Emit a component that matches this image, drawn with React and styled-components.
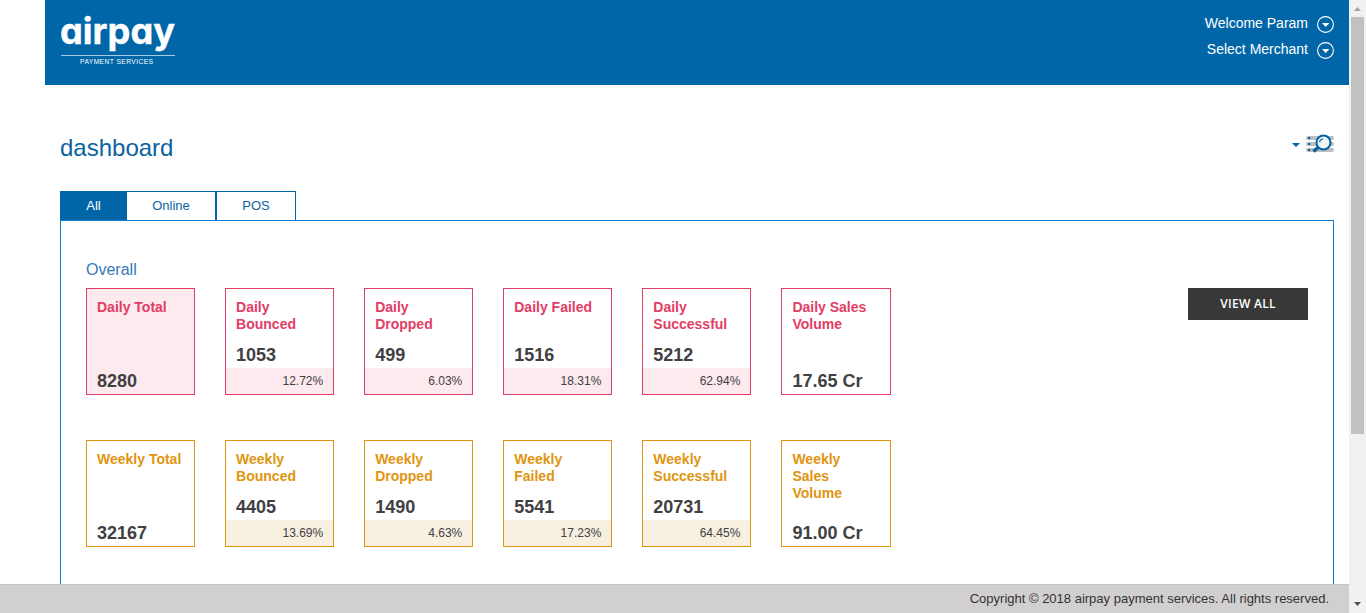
import React from "react";
import styled, { createGlobalStyle } from "styled-components";

const Global = createGlobalStyle`
  * { box-sizing: border-box; }
  body { margin: 0; background: #fff; font-family: "Liberation Sans", Arial, sans-serif; overflow: hidden; }
`;

const Shell = styled.div`
  height: 613px;
  display: flex;
`;
const Page = styled.div`
  flex: 1;
  min-width: 0;
  display: flex;
  flex-direction: column;
`;
const Header = styled.header`
  height: 85px;
  flex: none;
  margin-left: 45px;
  padding: 11px 15px 0;
  background: #0066a8;
  display: flex;
  justify-content: space-between;
`;
const LogoSvg = styled.svg`
  overflow: visible;
`;
const Wordmark = styled.text`
  fill: #fff;
  font-family: Inter, sans-serif;
  font-weight: 700;
  font-size: 36px;
  font-feature-settings: "cv11";
  stroke: #fff;
  stroke-width: 0.4px;
`;
const UserMenu = styled.div`
  display: flex;
  flex-direction: column;
  align-items: flex-end;
`;
const UserLink = styled.div`
  height: 26px;
  display: flex;
  align-items: center;
  gap: 9px;
  color: #fff;
  font-size: 14px;
  line-height: 24px;
  span { padding-bottom: 2px; }
`;
const Content = styled.main`
  flex: 1;
  min-height: 0;
  overflow: hidden;
  margin-left: 45px;
  padding: 0 15px;
  display: flex;
  flex-direction: column;
`;
const TitleRow = styled.div`
  height: 106px;
  flex: none;
  padding-top: 48px;
  display: flex;
  justify-content: space-between;
`;
const Title = styled.h1`
  margin: 0;
  color: #0b63a0;
  font-size: 24px;
  line-height: 30px;
  font-weight: 400;
`;
const Tabs = styled.div`
  height: 29px;
  flex: none;
  display: flex;
`;
const Tab = styled.div`
  width: ${(p) => p.$width}px;
  border: 1px solid #0066a8;
  border-left-width: ${(p) => (p.$joined ? 0 : 1)}px;
  border-bottom: 0;
  background: ${(p) => (p.$active ? "#0066a8" : "#fff")};
  color: ${(p) => (p.$active ? "#fff" : "#0b63a0")};
  font-size: 13px;
  line-height: 27px;
  text-align: center;
`;
const Panel = styled.section`
  flex: 1;
  border: 1px solid #0a7fca;
  border-bottom: 0;
  padding: 39px 25px 0;
`;
const Overall = styled.h2`
  margin: 0 0 8px;
  color: #337ab7;
  font-size: 16px;
  line-height: 20px;
  font-weight: 400;
`;
const Body = styled.div`
  display: flex;
  justify-content: space-between;
  align-items: flex-start;
`;
const Rows = styled.div`
  display: flex;
  flex-direction: column;
  gap: 45px;
`;
const CardRow = styled.div`
  display: flex;
  gap: 30px;
`;
const Card = styled.div`
  width: ${(p) => (p.$wide ? 109.6 : 109.09)}px;
  height: 107px;
  border: 1px solid ${(p) => p.$color};
  background: ${(p) => p.$fill || "#fff"};
  display: flex;
  flex-direction: column;
`;
const CardTitle = styled.div`
  padding: 10px 10px 0;
  color: ${(p) => p.$color};
  font-size: 14px;
  line-height: 17px;
  font-weight: 700;
`;
const CardValue = styled.div`
  margin-top: auto;
  padding: 0 10px;
  color: #414042;
  font-size: 18px;
  line-height: 26px;
  font-weight: 700;
`;
const CardShare = styled.div`
  height: 26px;
  padding-right: 10px;
  background: ${(p) => p.$tint};
  color: #414042;
  font-size: 12px;
  line-height: 26px;
  text-align: right;
`;
const ViewAll = styled.button`
  width: 120px;
  height: 32px;
  padding: 0;
  border: 0;
  background: #383838;
  color: #fff;
  font: 600 12px/32px "Open Sans", sans-serif;
  letter-spacing: 0.3px;
`;
const Footer = styled.footer`
  height: 29px;
  flex: none;
  padding-right: 20px;
  border-top: 1px solid #c3c5c6;
  background: #d1cfd0;
  color: #333;
  font-size: 13px;
  line-height: 28px;
  text-align: right;
`;
const ScrollTrack = styled.div`
  width: 17px;
  background: #f1f1f1;
  display: flex;
  flex-direction: column;
  align-items: center;
`;
const ScrollThumb = styled.div`
  width: 13px;
  height: 417px;
  margin-bottom: auto;
  background: #c1c1c1;
`;

function Logo() {
  return (
    <LogoSvg width="118" height="60" viewBox="0 0 118 60">
      <Wordmark x="0" y="33" textLength="115" lengthAdjust="spacingAndGlyphs">airpay</Wordmark>
      <path d="M1 44.5H115" stroke="#a9cbe2" />
      <text x="20" y="53.300" textLength="73" fill="#fff" fontSize="6.700" fontFamily="Liberation Sans, sans-serif">PAYMENT SERVICES</text>
    </LogoSvg>
  );
}
function CircleCaret() {
  return (
    <svg width="17" height="17" viewBox="0 0 17 17">
      <circle cx="8.500" cy="8.500" r="7.900" fill="none" stroke="#fff" strokeWidth="1.100" />
      <path d="M5 7h7.400L8.700 11z" fill="#fff" />
    </svg>
  );
}
function SearchList() {
  return (
    <svg width="44" height="22" viewBox="0 0 44 22">
      <path d="M2 10h8L6 14z" fill="#0066a8" />
      <path d="M18 5h24M18 11h24M18 17h24" stroke="#bdbdbd" strokeWidth="4" strokeLinecap="round" />
      <path d="M18 4h2.200v2H18zM18 10h2.200v2H18zM18 16h2.200v2H18z" fill="#0066a8" />
      <circle cx="33.500" cy="9.500" r="7" fill="#f3f6f7" stroke="#0066a8" strokeWidth="2" />
      <path d="M29.500 9.200A4 4 0 0 1 33.200 6" fill="none" stroke="#0066a8" strokeWidth="1.200" />
      <path d="M28.500 14L23.500 18.500" stroke="#0066a8" strokeWidth="3.400" />
    </svg>
  );
}
function Arrow({ up }) {
  return (
    <svg width="17" height="17" viewBox="0 0 17 17">
      <path d={up ? "M5 11h7L8.500 7z" : "M5 6h7L8.500 10z"} fill={up ? "#a3a3a3" : "#505050"} />
    </svg>
  );
}

const rows = [
  {
    color: "#e23d65", tint: "#fceaee", filled: true,
    cards: [["Daily Total", "8280"], ["Daily Bounced", "1053", "12.72%"], ["Daily Dropped", "499", "6.03%"],
      ["Daily Failed", "1516", "18.31%"], ["Daily Successful", "5212", "62.94%"], ["Daily Sales Volume", "17.65 Cr"]],
  },
  {
    color: "#e09510", tint: "#f7efe0",
    cards: [["Weekly Total", "32167"], ["Weekly Bounced", "4405", "13.69%"], ["Weekly Dropped", "1490", "4.63%"],
      ["Weekly Failed", "5541", "17.23%"], ["Weekly Successful", "20731", "64.45%"], ["Weekly Sales Volume", "91.00 Cr"]],
  },
];

export default function App() {
  return (
    <Shell>
      <Global />
      <Page>
        <Header>
          <Logo />
          <UserMenu>
            <UserLink><span>Welcome Param</span><CircleCaret /></UserLink>
            <UserLink><span>Select Merchant</span><CircleCaret /></UserLink>
          </UserMenu>
        </Header>
        <Content>
          <TitleRow>
            <Title>dashboard</Title>
            <SearchList />
          </TitleRow>
          <Tabs>
            <Tab $width={67} $active>All</Tab>
            <Tab $width={89} $joined>Online</Tab>
            <Tab $width={80}>POS</Tab>
          </Tabs>
          <Panel>
            <Overall>Overall</Overall>
            <Body>
              <Rows>
                {rows.map((row) => (
                  <CardRow key={row.color}>
                    {row.cards.map(([title, value, share], i) => (
                      <Card key={title} $color={row.color} $wide={i === 5} $fill={row.filled && i === 0 ? row.tint : null}>
                        <CardTitle $color={row.color}>{title}</CardTitle>
                        <CardValue>{value}</CardValue>
                        {share && <CardShare $tint={row.tint}>{share}</CardShare>}
                      </Card>
                    ))}
                  </CardRow>
                ))}
              </Rows>
              <ViewAll>VIEW ALL</ViewAll>
            </Body>
          </Panel>
        </Content>
        <Footer>Copyright © 2018 airpay payment services. All rights reserved.</Footer>
      </Page>
      <ScrollTrack>
        <Arrow up />
        <ScrollThumb />
        <Arrow />
      </ScrollTrack>
    </Shell>
  );
}
